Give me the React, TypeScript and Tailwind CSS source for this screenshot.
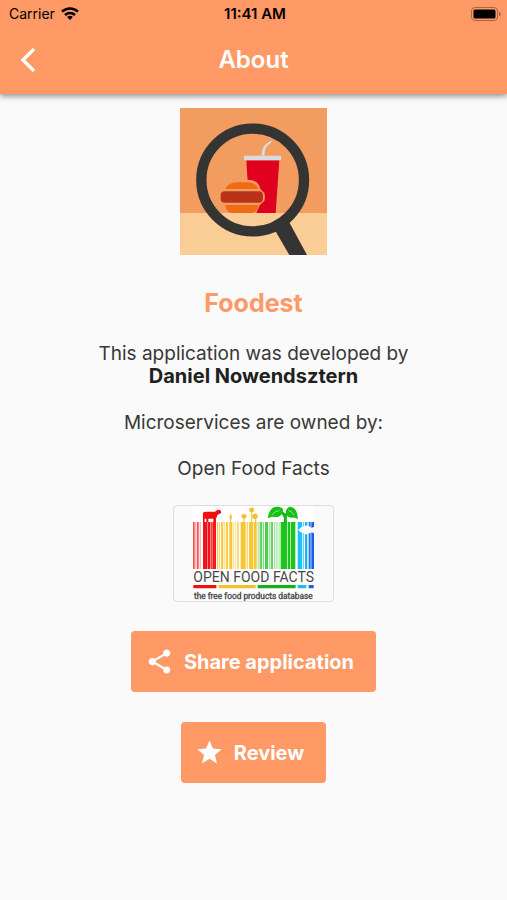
import React from "react";

type Bar = [x: number, width: number, color: string];

const BARS: Bar[] = [
  [85, 5, "#f55050"], [92, 3, "#fa9090"], [97, 5, "#f55050"], [105, 3, "#fa9090"],
  [115, 13, "#ee141c"], [129, 8, "#ee141c"], [138, 4, "#f44040"], [143, 11, "#f41818"],
  [157, 3, "#fac070"], [162, 4, "#fad670"], [169, 7, "#f8cc44"], [178, 4, "#fbe090"],
  [184, 6, "#f8cc44"], [194, 9, "#f7c630"], [206, 3, "#fbe090"], [212, 3, "#fbe090"],
  [218, 4, "#f8cc44"], [228, 15, "#f7c630"], [246, 4, "#fad670"], [253, 12, "#f7c630"],
  [267, 9, "#f7c630"], [279, 3, "#a0dc80"], [285, 7, "#68d068"], [294, 4, "#80dc80"],
  [301, 9, "#50cc50"], [312, 4, "#a0e4a0"], [318, 7, "#68d068"], [328, 4, "#a0e4a0"],
  [335, 4, "#a0e4a0"], [342, 3, "#a0e4a0"], [348, 20, "#1cc41c"], [370, 6, "#1cc41c"],
  [378, 14, "#1cc41c"], [399, 13, "#20c0f6"], [414, 4, "#60d8f8"], [421, 7, "#20b0f6"],
  [432, 6, "#2078e8"], [440, 8, "#1860e8"],
];

function WifiIcon() {
  return (
    <svg viewBox="0 0 18 13" className="h-[13px] w-[18px]" fill="none" stroke="black" strokeWidth="2.5" aria-hidden="true">
      <path d="M1 4.6C5.5.3 12.5.3 17 4.6M4 8C6.8 5.2 11.2 5.2 14 8" />
      <path d="M9 13 6.1 10.1Q9 7.6 11.9 10.1Z" fill="black" stroke="none" />
    </svg>
  );
}

function BatteryIcon() {
  return (
    <svg viewBox="0 0 30 14" className="h-[14px] w-[30px]" aria-hidden="true">
      <rect x=".5" y=".5" width="26" height="13" rx="3.5" fill="none" stroke="#a96647" />
      <rect x="2.5" y="2.5" width="22" height="9" rx="1.5" />
      <path d="M28 4.8q2 .8 2 2.2t-2 2.2z" fill="#a96647" />
    </svg>
  );
}

function FoodestLogo() {
  return (
    <svg viewBox="32 25 441 441" className="size-[147px]" role="img" aria-label="Foodest">
      <path fill="#f39c5f" d="M32 25h441v441H32z" />
      <path fill="#fbcd96" d="M32 340h441v126H32z" />
      <path fill="#dcdcdc" d="M276 168q1-36 33-46l-5 8q-18 9-19 38z" />
      <path fill="#e00020" d="M231 182h99l-11 158h-78z" />
      <path fill="#d9dbe0" d="M224 168h111v14H224z" />
      <path fill="#f39c5f" d="M160 270q10-30 44-30h31q32 0 38 28l12 12q3 12 0 24l-14 13-10 23h-93z" />
      <path fill="#ee6c14" d="M168 268q8-20 36-20h28q28 0 35 20z" />
      <path fill="#ee6c14" d="M168 316h99q-3 24-22 24h-55q-19 0-22-24z" />
      <rect x="154" y="275" width="127" height="34" rx="12" fill="#b9331a" />
      <circle cx="250" cy="241" r="154" fill="none" stroke="#343432" strokeWidth="31" />
      <path fill="#343432" d="m316 390 43-24 54 100h-53z" />
    </svg>
  );
}

function OpenFoodFactsLogo() {
  return (
    <svg viewBox="28 32 477 285" className="h-[95px] w-[159px]" role="img" aria-label="Open Food Facts, the free food products database">
      <path fill="#fff" d="M84 32h365v285H84z" />
      {BARS.map(([x, width, color]) => (
        <rect key={x} x={x} y="80" width={width} height="141" fill={color} />
      ))}
      <path fill="#f01010" d="M115 81V58q-2-9 8-9h28l8-6 9 2 2 8-11 5-5 12v10h-8V70h-15v10h-6V70h-5v11z" />
      <g fill="#f5c030" stroke="#f5c030">
        <path strokeWidth="3" d="M198 80V67M238 80V66M261 80V45M273 80V64" />
        <ellipse cx="198" cy="65" rx="3" ry="8" />
        <circle cx="238" cy="63" r="7" />
        <circle cx="261" cy="44" r="7" />
        <circle cx="271" cy="63" r="8" />
      </g>
      <path fill="none" stroke="#12b812" strokeWidth="9" d="M362 82V66Q365 50 383 48M362 66Q355 48 337 48" />
      <path fill="#16c016" d="M309 69q6-36 28-35 24 1 16 16-4 17-21 15-13-2-23 4zM400 72q-2-38-26-38-14 8-9 21 4 13 18 12 10-1 17 5z" />
      <path fill="none" stroke="#c8f0c8" strokeWidth="2" d="M321 60q8-13 24-15M388 59q-5-10-17-14" />
      <path fill="#fff" d="M401 103q10-11 22-10 4-6 9 0 7 1 8 5l9-4v20l-9-3q-6 5-13 4-5 5-8-1-12-1-18-11z" />
      <g fill="#484848" fontFamily="Roboto, 'Liberation Sans', sans-serif" textAnchor="middle">
        <text x="267" y="261" fontSize="42">OPEN FOOD FACTS</text>
        <text x="266" y="310" fontSize="25" stroke="#484848" strokeWidth="1">the free food products database</text>
      </g>
      <path fill="#f01010" d="M86 269h69v10H86z" />
      <path fill="#f5be30" d="M162 269h111v10H162z" />
      <path fill="#16b016" d="M279 269h114v10H279z" />
      <path fill="#20b8f0" d="M399 269h26v10h-26z" />
      <path fill="#1860e0" d="M432 269h15v10h-15z" />
    </svg>
  );
}

function ActionButton({ icon, children }: { icon: React.ReactNode; children: React.ReactNode }) {
  return (
    <button type="button" className="flex h-[61px] items-center gap-2.5 rounded-[4px] bg-[#ff9966] pr-[22px] pl-3.5 text-[20px] font-bold text-white">
      {icon}
      {children}
    </button>
  );
}

export default function App() {
  return (
    <div className="min-h-screen bg-[#fafafa] font-['Inter',sans-serif] text-[#383838]">
      <header className="bg-[#ff9966] shadow-[0_2px_6px_rgba(0,0,0,0.45)]">
        <div className="grid h-[27px] grid-cols-[1fr_auto_1fr] items-center pr-[6px] pl-[9px] text-[14px] text-black">
          <div className="flex items-center gap-[6px]">
            <span>Carrier</span>
            <WifiIcon />
          </div>
          <span className="text-[15px] leading-5 font-semibold">11:41 AM</span>
          <div className="flex justify-end">
            <BatteryIcon />
          </div>
        </div>
        <div className="grid h-[67px] grid-cols-[1fr_auto_1fr] items-center px-4 pb-[2px]">
          <button type="button" aria-label="Back" className="flex size-6 items-center justify-center">
            <svg viewBox="0 0 16 24" className="h-6 w-4" fill="none" stroke="white" strokeWidth="3.4" aria-hidden="true">
              <path d="M14 1 3 12l11 11" />
            </svg>
          </button>
          <h1 className="text-[24px] font-semibold text-white">About</h1>
        </div>
      </header>

      <main className="flex flex-col items-center px-4 pt-[14px] pb-8">
        <FoodestLogo />
        <h2 className="mt-8 text-[25px] leading-8 font-bold text-[#ff9966]">Foodest</h2>
        <div className="mt-[23px] flex flex-col gap-[23px] text-center text-[19px] leading-[23px]">
          <p>
            This application was developed by
            <br />
            <strong className="text-[20px] font-bold text-[#202020]">Daniel Nowendsztern</strong>
          </p>
          <p>Microservices are owned by:</p>
          <p>Open Food Facts</p>
        </div>
        <a href="#open-food-facts" className="mt-[25px] overflow-hidden rounded-[4px] border border-[#dedede]">
          <OpenFoodFactsLogo />
        </a>
        <div className="mt-[29px] flex flex-col items-center gap-[30px]">
          <ActionButton
            icon={
              <svg viewBox="0 0 24 24" className="size-[29px]" fill="white" aria-hidden="true">
                <path d="M18 16.08c-.76 0-1.44.3-1.96.77L8.91 12.7c.05-.23.09-.46.09-.7s-.04-.47-.09-.7l7.05-4.11c.54.5 1.25.81 2.04.81 1.66 0 3-1.34 3-3s-1.34-3-3-3-3 1.34-3 3c0 .24.04.47.09.7L8.04 9.81C7.5 9.31 6.79 9 6 9c-1.66 0-3 1.34-3 3s1.34 3 3 3c.79 0 1.5-.31 2.04-.81l7.12 4.16c-.05.21-.08.43-.08.65 0 1.61 1.31 2.92 2.92 2.92s2.92-1.31 2.92-2.92-1.31-2.92-2.92-2.92z" />
              </svg>
            }
          >
            Share application
          </ActionButton>
          <ActionButton
            icon={
              <svg viewBox="0 0 24 24" className="size-[29px]" fill="white" aria-hidden="true">
                <path d="M12 17.27 18.18 21l-1.64-7.03L22 9.24l-7.19-.61L12 2 9.19 8.63 2 9.24l5.46 4.73L5.82 21z" />
              </svg>
            }
          >
            Review
          </ActionButton>
        </div>
      </main>
    </div>
  );
}
